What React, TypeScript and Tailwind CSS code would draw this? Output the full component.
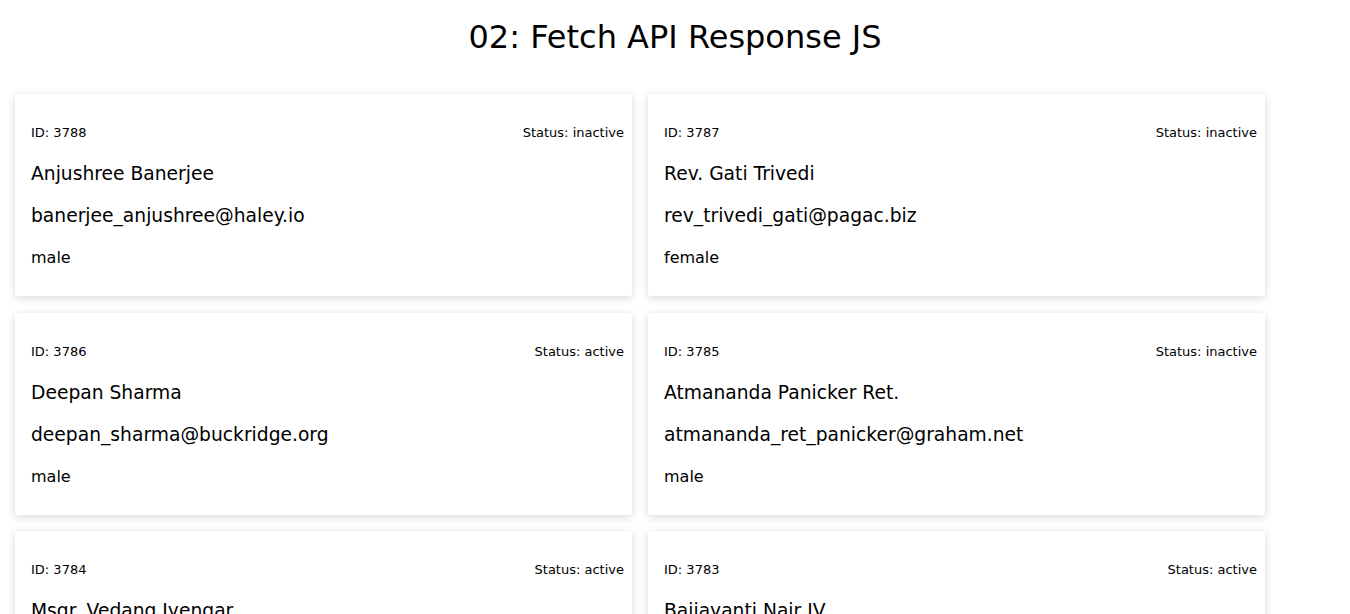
const users = [
  { id: 3788, name: "Anjushree Banerjee", email: "banerjee_anjushree@haley.io", gender: "male", status: "inactive" },
  { id: 3787, name: "Rev. Gati Trivedi", email: "rev_trivedi_gati@pagac.biz", gender: "female", status: "inactive" },
  { id: 3786, name: "Deepan Sharma", email: "deepan_sharma@buckridge.org", gender: "male", status: "active" },
  { id: 3785, name: "Atmananda Panicker Ret.", email: "atmananda_ret_panicker@graham.net", gender: "male", status: "inactive" },
  { id: 3784, name: "Msgr. Vedang Iyengar", email: "vedang_msgr_iyengar@kuhn.co", gender: "male", status: "active" },
  { id: 3783, name: "Baijayanti Nair IV", email: "iv_baijayanti_nair@wolff.info", gender: "female", status: "active" },
];

export default function App() {
  return (
    <div className="min-h-screen bg-white text-black font-['DejaVu_Sans',sans-serif]">
      <h1 className="pt-[14px] text-center text-[32px] leading-[46px]">02: Fetch API Response JS</h1>
      <div className="mt-[34px] grid grid-cols-[617px_617px] gap-x-4 gap-y-[16.5px] pl-[15px] pb-4">
        {users.map((u) => (
          <div key={u.id} className="bg-white rounded-[2px] shadow-[0_2px_8px_rgba(0,0,0,0.16)] pl-4 pr-2 pt-[31px] pb-[28px]">
            <div className="flex justify-between text-[13px] leading-4">
              <span>ID: {u.id}</span>
              <span>Status: {u.status}</span>
            </div>
            <p className="mt-[21px] text-[18.7px] leading-6">{u.name}</p>
            <p className="mt-[18px] text-[18.7px] leading-6">{u.email}</p>
            <p className="mt-[20px] text-[16px] leading-5">{u.gender}</p>
          </div>
        ))}
      </div>
    </div>
  );
}
